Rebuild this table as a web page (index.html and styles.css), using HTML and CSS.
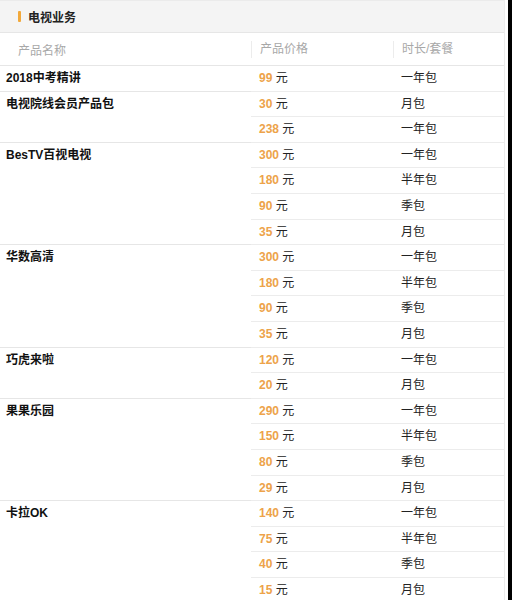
FILE: index.html
```html
<!DOCTYPE html>
<html lang="zh-CN">
<head>
<meta charset="utf-8">
<title>电视业务</title>
<link rel="stylesheet" href="styles.css">
</head>
<body>
<div class="page">
  <div class="panel">
    <div class="title-bar"><span class="mark"></span><span class="title">电视业务</span></div>
    <table class="price-table">
      <colgroup><col class="c-name"><col class="c-price"><col class="c-dur"></colgroup>
      <thead>
        <tr><th class="h-name">产品名称</th><th><span class="sep">产品价格</span></th><th><span class="sep">时长/套餐</span></th></tr>
      </thead>
      <tbody>
        <tr class="grp"><td class="name">2018中考精讲</td><td><b class="num">99</b> 元</td><td>一年包</td></tr>

        <tr class="grp"><td class="name" rowspan="2">电视院线会员产品包</td><td><b class="num">30</b> 元</td><td>月包</td></tr>
        <tr><td><b class="num">238</b> 元</td><td>一年包</td></tr>

        <tr class="grp"><td class="name" rowspan="4">BesTV百视电视</td><td><b class="num">300</b> 元</td><td>一年包</td></tr>
        <tr><td><b class="num">180</b> 元</td><td>半年包</td></tr>
        <tr><td><b class="num">90</b> 元</td><td>季包</td></tr>
        <tr><td><b class="num">35</b> 元</td><td>月包</td></tr>

        <tr class="grp"><td class="name" rowspan="4">华数高清</td><td><b class="num">300</b> 元</td><td>一年包</td></tr>
        <tr><td><b class="num">180</b> 元</td><td>半年包</td></tr>
        <tr><td><b class="num">90</b> 元</td><td>季包</td></tr>
        <tr><td><b class="num">35</b> 元</td><td>月包</td></tr>

        <tr class="grp"><td class="name" rowspan="2">巧虎来啦</td><td><b class="num">120</b> 元</td><td>一年包</td></tr>
        <tr><td><b class="num">20</b> 元</td><td>月包</td></tr>

        <tr class="grp"><td class="name" rowspan="4">果果乐园</td><td><b class="num">290</b> 元</td><td>一年包</td></tr>
        <tr><td><b class="num">150</b> 元</td><td>半年包</td></tr>
        <tr><td><b class="num">80</b> 元</td><td>季包</td></tr>
        <tr><td><b class="num">29</b> 元</td><td>月包</td></tr>

        <tr class="grp"><td class="name" rowspan="4">卡拉OK</td><td><b class="num">140</b> 元</td><td>一年包</td></tr>
        <tr><td><b class="num">75</b> 元</td><td>半年包</td></tr>
        <tr><td><b class="num">40</b> 元</td><td>季包</td></tr>
        <tr><td><b class="num">15</b> 元</td><td>月包</td></tr>
      </tbody>
    </table>
  </div>
</div>
</body>
</html>
```

FILE: styles.css
```css
html, body {
  margin: 0;
  padding: 0;
  background: #000;
}
body {
  font-family: "Liberation Sans", "Noto Sans CJK SC", sans-serif;
  font-size: 12px;
  color: #222;
  overflow: hidden;
}
.page {
  width: 508px;
  height: 600px;
  background: #fff;
  overflow: hidden;
}
.panel {
  width: 504px;
  border-right: 1px solid #ececec;
  min-height: 600px;
}
.title-bar {
  height: 31px;
  background: #f4f4f4;
  border-top: 1px solid #ebebeb;
  border-bottom: 1px solid #e6e6e6;
  display: flex;
  align-items: center;
  padding-left: 18px;
  box-sizing: border-box;
  height: 33px;
}
.mark {
  width: 3px;
  height: 11px;
  background: #f2a93b;
  border-radius: 1px;
  margin-right: 7px;
}
.title {
  font-weight: bold;
  font-size: 12px;
  color: #222;
}
.price-table {
  width: 504px;
  border-collapse: separate;
  border-spacing: 0;
  table-layout: fixed;
}
.c-name { width: 251px; }
.c-price { width: 142px; }
.c-dur { width: 111px; }
.price-table th {
  height: 32px;
  padding: 0;
  text-align: left;
  font-weight: normal;
  color: #a8a8a8;
  font-size: 12px;
  border-bottom: 1px solid #e6e6e6;
  vertical-align: middle;
}
.price-table th.h-name {
  padding-left: 18px;
}
.sep {
  display: inline-block;
  border-left: 1px solid #ececec;
  padding-left: 8px;
  height: 17px;
  line-height: 17px;
}
.price-table tbody tr {
  height: 25.6px;
}
.price-table td {
  padding: 0 0 0 8px;
  border-bottom: 1px solid #ececec;
  line-height: 24.6px;
  vertical-align: middle;
  color: #222;
}
.price-table td.name {
  padding-left: 6px;
  font-weight: bold;
  vertical-align: top;
  color: #111;
  border-bottom-color: #e6e6e6;
}
.num {
  color: #eda34a;
  font-weight: bold;
}
```
